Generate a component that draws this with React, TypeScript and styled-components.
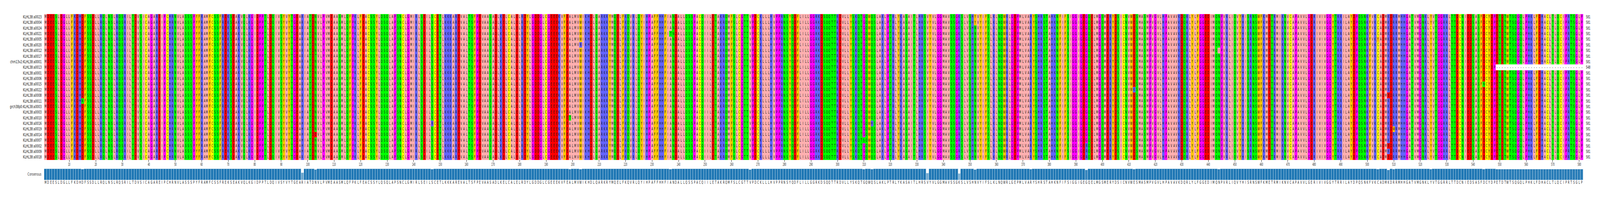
import React, { useMemo } from 'react';
import styled, { createGlobalStyle } from 'styled-components';

const GlobalStyle = createGlobalStyle`
  html, body {
    margin: 0;
    background: #fff;
    overflow: hidden;
  }
  body {
    font-family: 'DejaVu Sans', 'Liberation Sans', sans-serif;
    color: #111;
  }
`;

const SEQUENCE = [
  'MDEESLDGLL', 'FKDHDFSSDL', 'LRQLNSLRQS', 'RILTDVSICA', 'GAREIPCHRN', 'VLASSSPYFR',
  'AMFCSSFREK', 'SEAKVQLKGI', 'DPPTLDQIVS', 'YVYTGEARIA', 'TDNVLPVMEA', 'ASMLQFPKLF',
  'EACSSYLQSQ', 'LAPSNCLGMI', 'RLSEILSCET', 'LKKKAREVAL', 'TSFPEVAASA', 'DLKELCALEL',
  'RDYLGDDGLC', 'GEEEKVFEAL', 'MVWIKHDLQA', 'RKRYMQELFK', 'QVRLQYIHPA', 'FFHHFIANDA',
  'LLQSSPACQI', 'ILETAKRQMF', 'SLCGTTVPDC', 'KLLLHVPPRN', 'SYQDFLILLG', 'GRKDSQQTTR',
  'DVLLYSKQTG', 'QWQSLAKLPT', 'RLYKASAITL', 'HRSVYVLGGM', 'AVSSGKSLVS', 'HNVYIFSLKL',
  'NQWRLGEPML', 'VARYSHRSTA', 'HKNFIFSIGG', 'IGEGQELMGS', 'MERYDSICNV', 'WESMASMPVG',
  'VLHPAVAVKD', 'QRLYLFGGED', 'IMQNPVRLIQ', 'VYHISRNSWF', 'KMETRMIKNV', 'CAPAVVLGER',
  'IVIVGGYTRR', 'ILAYDPQSNK', 'FVKCADMKDR', 'RMHHGATVMG', 'NKLYVTGGRR', 'LTTDCNIEDS',
  'ASFDCYDPET', 'DTWTSQGQLP', 'HKLFDHACLT', 'LQCIPRTSGL', 'P',
].join('');

const NAMES = [
  'KLHL38:a0023', 'KLHL38:a0004', 'KLHL38:a0024', 'KLHL38:a0021', 'KLHL38:a0005',
  'KLHL38:a0020', 'KLHL38:a0012', 'KLHL38:a0017', 'chm13v2:KLHL38:a0001', 'KLHL38:a0013',
  'KLHL38:a0001', 'KLHL38:a0006', 'KLHL38:a0015', 'KLHL38:a0022', 'KLHL38:a0008',
  'KLHL38:a0011', 'grch38p0:KLHL38:a0003', 'KLHL38:a0003', 'KLHL38:a0010', 'KLHL38:a0016',
  'KLHL38:a0019', 'KLHL38:a0014', 'KLHL38:a0007', 'KLHL38:a0002', 'KLHL38:a0009', 'KLHL38:a0018',
];

const range = (from: number, to: number) =>
  Array.from({ length: to - from + 1 }, (_, idx) => from + idx);

// [column (1-based), row indexes, residue]
const VARIANTS: [number, number[], string][] = [
  [15, [15], 'N'],
  [98, range(16, 24), 'H'],
  [103, [7], 'T'],
  [103, [21], 'D'],
  [147, [19], 'R'],
  [199, [18], 'T'],
  [203, [5], 'R'],
  [237, [3], 'T'],
  [267, [11, 12], 'I'],
  [310, [22], 'S'],
  [313, [19], 'H'],
  [334, range(16, 25), 'I'],
  [346, range(15, 25), 'R'],
  [352, [0, 1], 'Y'],
  [373, [0], 'H'],
  [394, [23, 24, 25], 'R'],
  [412, [13], 'K'],
  [444, [6], 'I'],
  [504, [4], 'Y'],
  [508, [14, 23, 25], 'E'],
  [510, [20], 'W'],
  [524, [2], 'C'],
  [544, [12], 'N'],
];

const GAP_ROW = 9;
const GAP_FROM = 549;
const COLUMNS = SEQUENCE.length;

// figure is 6089 wide; the window may be narrower, so text is squeezed along with the columns
const FIGURE_WIDTH = 6089;

const RESIDUE_COLORS: Record<string, string> = {
  A: '#ffafaf', I: '#ffafaf', L: '#ffafaf', M: '#ffafaf', V: '#ffafaf',
  D: '#ff0000', E: '#ff0000',
  S: '#00ff00', T: '#00ff00', N: '#00ff00', Q: '#00ff00',
  G: '#ff00ff', P: '#ff00ff',
  F: '#ffc800', W: '#ffc800', Y: '#ffc800',
  K: '#6464ff', R: '#6464ff', H: '#6464ff',
  C: '#ffff00',
  '-': '#ffffff',
};

const Plot = styled.div`
  width: 100vw;
  height: 510px;
  padding-top: 36px;
  box-sizing: border-box;
  overflow: hidden;
`;

const Row = styled.div<{ $height: number }>`
  display: grid;
  grid-template-columns: minmax(0, 168fr) minmax(0, 5857fr) minmax(0, 64fr);
  height: ${(p) => p.$height}px;
  align-items: stretch;
`;

const RowLabel = styled.div`
  padding-right: calc(100vw * 10 / ${FIGURE_WIDTH});
  display: flex;
  align-items: center;
  justify-content: flex-end;
  white-space: nowrap;
`;

const RowName = styled.span`
  flex: none;
  font-size: 10.4px;
  line-height: 1;
  transform: scaleX(calc(0.94 * var(--squeeze)));
  transform-origin: 100% 50%;
`;

const ColumnGrid = styled.div`
  display: grid;
  grid-template-columns: repeat(${COLUMNS}, minmax(0, 1fr));
  min-width: 0;
`;

const Cell = styled.span<{ $residue: string }>`
  display: flex;
  align-items: center;
  justify-content: center;
  min-width: 0;
  background: ${(p) => RESIDUE_COLORS[p.$residue]};
`;

const Glyph = styled.span`
  flex: none;
  display: block;
  font-size: 10.6px;
  line-height: 1;
  margin-top: -1px;
  transform: scaleX(calc(0.82 * var(--squeeze)));
`;

const RowLength = styled.div`
  padding-left: calc(100vw * 11 / ${FIGURE_WIDTH});
  display: flex;
  align-items: center;
`;

const LengthValue = styled.span`
  flex: none;
  font-size: 10.6px;
  line-height: 1;
  transform: scaleX(calc(0.84 * var(--squeeze)));
  transform-origin: 0 50%;
`;

const Tick = styled.div<{ $column: number }>`
  grid-column: ${(p) => p.$column};
  min-width: 0;
  display: flex;
  flex-direction: column;
  align-items: center;
`;

const TickMark = styled.div`
  width: 1px;
  height: 5px;
  background: #333;
  flex: none;
`;

const TickLabel = styled.div`
  flex: none;
  margin-top: 2px;
  font-size: 9.6px;
  line-height: 1;
  white-space: nowrap;
  color: #222;
  transform: scaleX(calc(0.72 * var(--squeeze)));
`;

const Bars = styled(ColumnGrid)`
  align-items: end;
`;

const Bar = styled.div`
  box-sizing: border-box;
  min-width: 0;
  border-top: 1px solid rgba(255, 255, 255, 0.7);
  border-right: 1px solid rgba(255, 255, 255, 0.6);
`;

const ConsensusName = styled(RowName)`
  color: #333;
`;

const ConsensusCell = styled.span`
  display: flex;
  align-items: center;
  justify-content: center;
  min-width: 0;
`;

const ConsensusGlyph = styled(Glyph)`
  margin-top: 0;
  color: #222;
`;

const useAlignment = () =>
  useMemo(() => {
    const rows = NAMES.map((name, rowIdx) => {
      const residues = SEQUENCE.split('');
      VARIANTS.forEach(([column, rowIdxs, residue]) => {
        if (rowIdxs.includes(rowIdx)) residues[column - 1] = residue;
      });
      if (rowIdx === GAP_ROW) residues.fill('-', GAP_FROM - 1);
      return { name, residues, length: residues.filter((r) => r !== '-').length };
    });

    const consensus = SEQUENCE.split('').map((_, colIdx) => {
      const counts: Record<string, number> = {};
      rows.forEach(({ residues }) => {
        counts[residues[colIdx]] = (counts[residues[colIdx]] || 0) + 1;
      });
      const [residue, count] = Object.entries(counts).sort((a, b) => b[1] - a[1])[0];
      return { residue, identity: count / rows.length };
    });

    return { rows, consensus };
  }, []);

const App = () => {
  const { rows, consensus } = useAlignment();
  const ticks = range(1, Math.floor(COLUMNS / 10)).map((n) => n * 10);
  const squeeze = Math.min(1, window.innerWidth / FIGURE_WIDTH);

  return (
    <>
      <GlobalStyle />
      <Plot style={{ '--squeeze': squeeze } as React.CSSProperties}>
        {rows.map(({ name, residues, length }) => (
          <Row $height={14.385} key={name}>
            <RowLabel>
              <RowName>{name}</RowName>
            </RowLabel>
            <ColumnGrid>
              {residues.map((residue, idx) => (
                <Cell $residue={residue} key={idx}>
                  <Glyph>{residue}</Glyph>
                </Cell>
              ))}
            </ColumnGrid>
            <RowLength>
              <LengthValue>{length}</LengthValue>
            </RowLength>
          </Row>
        ))}
        <Row $height={22}>
          <div />
          <ColumnGrid>
            {ticks.map((n) => (
              <Tick $column={n} key={n}>
                <TickMark />
                <TickLabel>{n}</TickLabel>
              </Tick>
            ))}
          </ColumnGrid>
        </Row>
        <Row $height={29}>
          <RowLabel>
            <ConsensusName>Consensus</ConsensusName>
          </RowLabel>
          <Bars>
            {consensus.map(({ identity }, idx) => (
              <Bar
                key={idx}
                style={{
                  height: `${identity * 100}%`,
                  backgroundColor: `rgba(31, 119, 180, ${identity})`,
                }}
              />
            ))}
          </Bars>
        </Row>
        <Row $height={14}>
          <div />
          <ColumnGrid>
            {consensus.map(({ residue }, idx) => (
              <ConsensusCell key={idx}>
                <ConsensusGlyph>{residue}</ConsensusGlyph>
              </ConsensusCell>
            ))}
          </ColumnGrid>
        </Row>
      </Plot>
    </>
  );
};

export default App;
